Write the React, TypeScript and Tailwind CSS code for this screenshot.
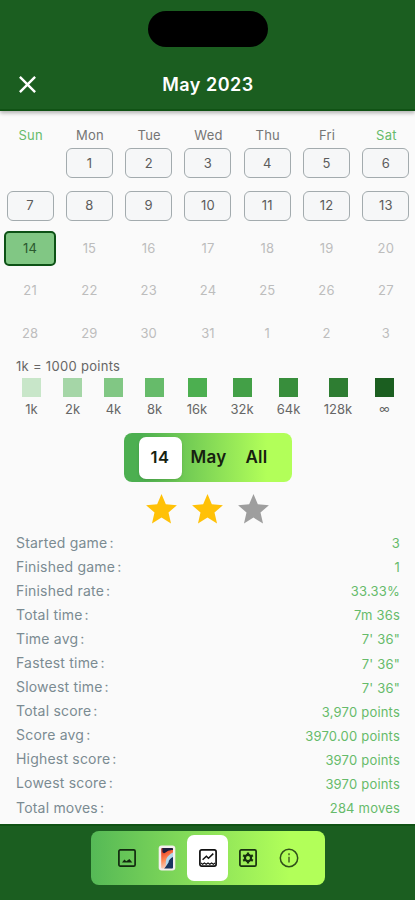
import React from 'react';
import { MdClose, MdStar } from 'react-icons/md';

const weekdays = ['Sun', 'Mon', 'Tue', 'Wed', 'Thu', 'Fri', 'Sat'];
const days: (number | null)[] = [null, ...Array.from({ length: 31 }, (_, i) => i + 1), 1, 2, 3];

const legend = [
  { label: '1k', color: 'bg-[#c8e6c9]', width: 'w-[19px]' },
  { label: '2k', color: 'bg-[#a5d6a7]', width: 'w-[19px]' },
  { label: '4k', color: 'bg-[#81c784]', width: 'w-[19px]' },
  { label: '8k', color: 'bg-[#66bb6a]', width: 'w-[19px]' },
  { label: '16k', color: 'bg-[#4caf50]', width: 'w-[22px]' },
  { label: '32k', color: 'bg-[#43a047]', width: 'w-[24px]' },
  { label: '64k', color: 'bg-[#388e3c]', width: 'w-[25px]' },
  { label: '128k', color: 'bg-[#2e7d32]', width: 'w-[30px]' },
  { label: '∞', color: 'bg-[#1b5e20]', width: 'w-[19px]' },
];

const stats = [
  ['Started game', '3'],
  ['Finished game', '1'],
  ['Finished rate', '33.33%'],
  ['Total time', '7m 36s'],
  ['Time avg', "7' 36\""],
  ['Fastest time', "7' 36\""],
  ['Slowest time', "7' 36\""],
  ['Total score', '3,970 points'],
  ['Score avg', '3970.00 points'],
  ['Highest score', '3970 points'],
  ['Lowest score', '3970 points'],
  ['Total moves', '284 moves'],
];

function Day({ day, index }: { day: number | null; index: number }) {
  if (day === null) return <div />;
  if (index === 14) {
    return (
      <div className="flex items-center justify-center">
        <div className="flex h-[35px] w-[52px] items-center justify-center rounded-[5px] border-2 border-[#0d5216] bg-[#81c784] text-[#2c5a2f]">
          {day}
        </div>
      </div>
    );
  }
  if (index < 14) {
    return (
      <div className="flex items-center justify-center">
        <div className="flex h-[30px] w-[47px] items-center justify-center rounded-[6px] border border-[#a3abae] bg-[#f6f7f8] text-[#5c5c5c]">
          {day}
        </div>
      </div>
    );
  }
  return <div className="flex items-center justify-center text-[#bdbdbd]">{day}</div>;
}

function ImageIcon() {
  return (
    <svg viewBox="0 0 20 20" className="size-[20px]" fill="none" stroke="#12290f" strokeWidth="1.7">
      <rect x="1.9" y="1.9" width="16.2" height="16.2" rx="1.4" />
      <path d="M5 14.6 7.4 11.6 9.3 13.3 12.4 11 15.3 14.6Z" fill="#12290f" stroke="none" />
    </svg>
  );
}

function WallpaperIcon() {
  return (
    <svg viewBox="0 0 18 26" className="h-[26px] w-[18px]">
      <defs>
        <linearGradient id="flame" x1="0" y1="0" x2="0.3" y2="1">
          <stop offset="0" stopColor="#8d2527" />
          <stop offset="0.28" stopColor="#f0522e" />
          <stop offset="0.6" stopColor="#ff8a55" />
          <stop offset="1" stopColor="#f5d6cb" />
        </linearGradient>
        <clipPath id="screen">
          <rect x="3.2" y="3" width="11.8" height="20.6" rx="1" />
        </clipPath>
      </defs>
      <rect x="0.7" y="0.6" width="16.6" height="24.8" rx="3" fill="#f4eeee" />
      <g clipPath="url(#screen)">
        <rect x="3" y="3" width="12" height="21" fill="url(#flame)" />
        <path d="M4.5 3H15V5Q10 4.6 7.5 7.5Q5.5 9 4.5 7Z" fill="#1c1d3c" />
        <path d="M15 7.5Q10 10 8.3 14Q7 19 9 22L15 24Z" fill="#b4d8ec" />
        <path d="M15 12Q10.8 14 10.5 17.5Q9 20 6 24H15Z" fill="#18345f" />
      </g>
    </svg>
  );
}

function ChartIcon() {
  return (
    <svg viewBox="0 0 20 20" className="size-[20px]" fill="none" stroke="#111" strokeWidth="1.7">
      <rect x="1.9" y="1.9" width="16.2" height="16.2" rx="1.8" />
      <path d="M4.6 11.8 8.4 8.2 10.5 10.2 15.3 5.6" strokeWidth="1.5" />
      <path d="M3 15 4.6 16.2 6.4 15 8.2 16.2 10 15 11.8 16.2 13.6 15 15.4 16.2 17 15" strokeWidth="1.2" />
    </svg>
  );
}

function SettingsIcon() {
  return (
    <svg viewBox="0 0 20 20" className="size-[20px]" fill="none" stroke="#17300f" strokeWidth="1.7">
      <rect x="1.9" y="1.9" width="16.2" height="16.2" rx="1.4" />
      <circle cx="10" cy="10" r="3.1" strokeWidth="2.2" />
      <path d="M10 4.4v3M10 12.6v3M5.15 7.2l2.6 1.5M12.25 11.3l2.6 1.5M5.15 12.8l2.6-1.5M12.25 8.7l2.6-1.5" strokeWidth="2.3" />
    </svg>
  );
}

function InfoIcon() {
  return (
    <svg viewBox="0 0 20 20" className="size-[20px]" fill="none" stroke="#30501a" strokeWidth="1.5">
      <circle cx="10" cy="10" r="8.7" />
      <path d="M10 8.8v5.8M10 5.3v2" stroke="#52762a" strokeWidth="1.7" />
    </svg>
  );
}

export default function App() {
  return (
    <div className="flex h-[900px] w-[415px] flex-col overflow-hidden bg-[#fafafa] font-['Inter','Liberation_Sans',sans-serif]">
      <header className="relative z-10 h-[111px] shrink-0 border-b-2 border-[#105214] bg-[#1b5e20] pt-[11px] shadow-[0_2px_4px_rgba(0,0,0,0.3)]">
        <div className="ml-[148px] h-[36px] w-[120px] rounded-full bg-black" />
        <div className="mt-[17px] grid h-[40px] grid-cols-[55px_1fr_54px] items-center">
          <MdClose className="ml-[13px] size-[29px] text-white" />
          <h1 className="text-center text-[18px] font-semibold tracking-[0.5px] text-white">May 2023</h1>
        </div>
      </header>

      <main className="flex h-[713px] shrink-0 flex-col">
        <div className="mt-[15px] ml-px grid h-[16px] w-[415px] grid-cols-7 items-center text-center text-[13px] tracking-[0.2px]">
          {weekdays.map((name, i) => (
            <div key={name} className={i % 6 === 0 ? 'text-[#66bb6a]' : 'text-[#757575]'}>{name}</div>
          ))}
        </div>
        <div className="ml-[0.5px] grid h-[213px] w-[415px] grid-cols-7 grid-rows-5 text-[13px] tracking-[0.2px]">
          {days.map((day, i) => <Day key={i} day={day} index={i} />)}
        </div>

        <div className="mt-[3px] pl-[16px] text-[13px] leading-[16px] tracking-[0.3px] text-[#666]">1k = 1000 points</div>
        <div className="mt-[4px] flex justify-between pr-[21px] pl-[22px]">
          {legend.map((item) => (
            <div key={item.label} className={`flex flex-col items-center ${item.width}`}>
              <div className={`size-[19px] ${item.color}`} />
              <div className={`mt-[4px] leading-[16px] whitespace-nowrap text-[#666] ${item.label === '∞' ? 'text-[11px]' : 'text-[13px]'}`}>{item.label}</div>
            </div>
          ))}
        </div>

        <div className="mx-auto mt-[16px] flex h-[49px] w-[168px] shrink-0 items-center rounded-[8px] bg-linear-to-r from-[#4caf50] from-10% to-[#b2ff59] to-85% pl-[15px] text-[17px] font-semibold text-[#16210f]">
          <div className="flex h-[42px] w-[43px] items-center justify-center rounded-[7px] bg-white text-[16.5px] tracking-[0.5px] shadow-sm">14</div>
          <div className="ml-px w-[52px] text-center tracking-[0.3px]">May</div>
          <div className="w-[44px] text-center tracking-[0.3px]">All</div>
        </div>

        <div className="mt-[9px] flex h-[37px] items-center justify-center gap-[9px]">
          <MdStar className="size-[37px] text-[#ffc107]" />
          <MdStar className="size-[37px] text-[#ffc107]" />
          <MdStar className="size-[37px] text-[#9e9e9e]" />
        </div>

        <dl className="mt-[3px] pr-[15px] pl-[16px] text-[14px]">
          {stats.map(([label, value]) => (
            <div key={label} className="flex h-[24.1px] items-center justify-between leading-[22px]">
              <dt className="-mt-px tracking-[0.2px] text-[#7b8b92]">{label}<span className="ml-[2px]">:</span></dt>
              <dd className="text-[13px] tracking-[0.2px] text-[#66bb6a]">{value}</dd>
            </div>
          ))}
        </dl>
      </main>

      <footer className="flex h-[76px] shrink-0 justify-center border-t-2 border-[#105214] bg-[#1b5e20] pt-[5px]">
        <nav className="ml-px flex h-[54px] w-[234px] items-center rounded-[8px] bg-linear-to-r from-[#55b956] to-[#b2ff59] to-85% pl-[16px]">
          <div className="flex w-[40px] justify-center"><ImageIcon /></div>
          <div className="flex w-[40px] justify-center"><WallpaperIcon /></div>
          <div className="flex h-[46px] w-[41px] items-center justify-center rounded-[7px] bg-white"><ChartIcon /></div>
          <div className="flex w-[40px] justify-center"><SettingsIcon /></div>
          <div className="flex w-[41px] justify-center"><InfoIcon /></div>
        </nav>
      </footer>
    </div>
  );
}
